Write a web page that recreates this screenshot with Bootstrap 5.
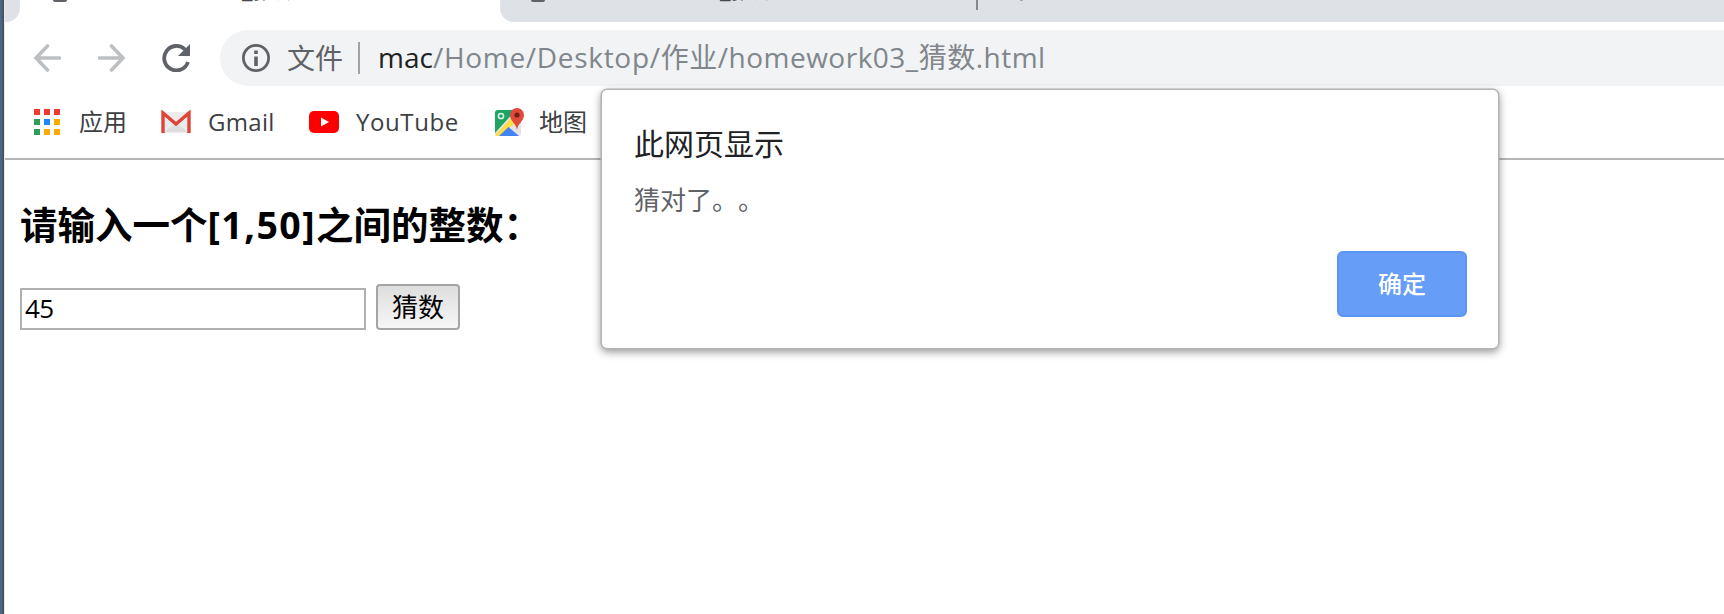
<!DOCTYPE html>
<html lang="zh-CN">
<head>
<meta charset="utf-8">
<meta name="viewport" content="width=device-width, initial-scale=1">
<title>homework03_猜数</title>
<link href="https://cdn.jsdelivr.net/npm/bootstrap@5.3.0/dist/css/bootstrap.min.css" rel="stylesheet">
<style>
html,body{height:100%;overflow:hidden}
body{font-family:"Open Sans","Noto Sans CJK SC",sans-serif;color:#000;background:#fff}
.window-edge{width:5px;background:linear-gradient(90deg,#4b6583 0,#4b6583 2px,#3f4b5b 3px,#4a4f56 3.500px,#e9eaeb 4.500px)}
.tabstrip{height:22px;background:#fff}
.tab-end{width:15px;background:#dee1e6;border-bottom-right-radius:14px}
.tab-active{width:480px}
.tab-rest{background:#dee1e6;border-bottom-left-radius:14px}
.tab-title{font-size:24px;line-height:30px;margin-top:-26px;color:#45484c;height:30px}
.fav{width:14px;height:2px;background:#5f6368;border-radius:0 0 7px 7px}
.tab-line{width:2px;height:10px;background:#85888d}
.toolbar{height:72px;padding:8px 0 8px 28px}
.omnibox{height:56px;background:#f1f3f4;border-radius:28px 0 0 28px;margin-left:30px;padding-left:22px;color:#5f6368;font-size:28px}
.omni-line{width:2px;height:32px;background:#a0a3a6}
.url{color:#80868b;white-space:pre;letter-spacing:.5px}
.url b{font-weight:400;color:#202124;letter-spacing:0}
.url i{font-style:normal;letter-spacing:.7px}
.bookmarks{height:66px;padding-left:29px;padding-bottom:8px;border-bottom:2px solid #b5b5b5;font-size:24px;color:#3c4043}
.bookmarks span{white-space:nowrap}
.page-title{font-size:37.5px;line-height:50px;font-weight:700;margin:40px 0 0;white-space:nowrap}
.page-title span{letter-spacing:1.450px}
.guess-input{width:346px;height:42px;border:2px solid #b0b0b0;padding:0 3px 2px;font-size:26px;letter-spacing:-.5px;line-height:36px;outline:0;color:#000}
.guess-btn{width:84px;height:46px;border:2px solid #a5a5a5;border-radius:4px;background:linear-gradient(#dedede,#f6f6f6);font-size:26px;line-height:38px;padding:0;color:#000}
.dialog-box{left:602px;top:90px;width:896px;height:258px;background:#fff;border-radius:5px;box-shadow:0 0 0 1.5px #b4b4b4,0 3px 9px 1px rgba(0,0,0,.42);padding:30px 31px 31px 32px}
.dialog-title{font-size:30px;line-height:48px;color:#202124}
.dialog-text{font-size:26px;line-height:40px;color:#5f6368;margin-top:12px}
.ok-btn{width:130px;height:66px;background:#669df6;border:2px solid #5a94f5;border-radius:6px;color:#fff;font-size:24px;font-weight:500;padding:0}
</style>
</head>
<body class="d-flex">
<div class="window-edge flex-shrink-0"></div>
<div class="flex-grow-1 overflow-hidden">
  <div class="tabstrip d-flex overflow-hidden">
    <div class="tab-end"></div>
    <div class="tab-active d-flex"><div class="fav" style="margin-left:33px"></div><div class="tab-title" style="margin-left:175px">_猜数</div></div>
    <div class="tab-rest d-flex flex-grow-1"><div class="fav" style="margin-left:31px"></div><div class="tab-title" style="margin-left:175px">_猜数</div><div class="tab-line" style="margin-left:197px"></div><div style="margin-left:42px;width:3px;height:1px;background:#a8abb0"></div></div>
  </div>
  <div class="toolbar d-flex align-items-center">
    <svg width="28" height="28" viewBox="0 0 28 28" fill="none" stroke="#bdc0c3" stroke-width="3.6" stroke-linecap="round"><path d="M26.500 14H3M14.500 2L3 14l11.500 12"/></svg>
    <svg style="margin-left:37px" width="28" height="28" viewBox="0 0 28 28" fill="none" stroke="#bdc0c3" stroke-width="3.6" stroke-linecap="round"><path d="M1.500 14H25M13.500 2L25 14 13.500 26"/></svg>
    <svg style="margin-left:36px" width="28" height="28" viewBox="0 0 28 28"><path d="M26 18A12.200 12.200 0 1 1 23 5.500" fill="none" stroke="#5f6368" stroke-width="3.800"/><path d="M28 0v12H16z" fill="#5f6368"/></svg>
    <div class="omnibox d-flex align-items-center flex-grow-1">
      <svg width="28" height="28" viewBox="0 0 28 28"><circle cx="14" cy="14" r="12.600" fill="none" stroke="#5f6368" stroke-width="2.800"/><path d="M12.200 12.500h3.600v9.500h-3.600zM12.200 6.500h3.600v3.600h-3.600z" fill="#5f6368"/></svg>
      <span style="margin-left:17px">文件</span>
      <div class="omni-line" style="margin-left:15px"></div>
      <span class="url" style="margin-left:18px;margin-top:-2px"><b>mac</b><i>/Home/Desktop/</i>作业/homework03_猜数.html</span>
    </div>
  </div>
  <div class="bookmarks d-flex align-items-center">
    <svg width="26" height="26" viewBox="0 0 26 26"><path d="M0 0h6v6H0zM10 0h6v6h-6zM20 0h6v6h-6z" fill="#f3392f"/><path d="M0 10h6v6H0zM0 20h6v6H0z" fill="#2d9d58"/><path d="M10 10h6v6h-6z" fill="#2086fb"/><path d="M20 10h6v6h-6zM10 20h6v6h-6zM20 20h6v6h-6z" fill="#fbaa08"/></svg>
    <span style="margin-left:19px;width:82px">应用</span>
    <svg width="30" height="24" viewBox="0 0 30 24"><path d="M2 2h26v21H2z" fill="#ececec"/><path d="M3 22l12-9 12 9z" fill="#dedede"/><path d="M2 23V3l13 11L28 3v20" fill="none" stroke="#dc4538" stroke-width="3.400"/></svg>
    <span style="margin-left:17px;width:101px;letter-spacing:.3px">Gmail</span>
    <svg width="30" height="22" viewBox="0 0 30 22"><rect width="30" height="22" rx="5" fill="#f00"/><path d="M12 6.500v9l8-4.500z" fill="#fff"/></svg>
    <span style="margin-left:17px;width:138px;letter-spacing:.6px">YouTube</span>
    <svg width="30" height="30" viewBox="0 0 30 30"><rect x="1" y="3" width="26" height="26" rx="3" fill="#e4e4e4"/><path d="M4 3h18L1 26V6q0-3 3-3z" fill="#1fa463"/><path d="M1 28L18 10l4 5L7 29H2z" fill="#ffdc48"/><path d="M5 29l9.500-9L25 29z" fill="#4283f4"/><circle cx="7" cy="9" r="2.600" fill="none" stroke="#e6f5ed" stroke-width="1.500"/><path d="M23 23c-1-7-7-9-7-15a7 7 0 0 1 14 0c0 6-6 8-7 15z" fill="#e04a3b"/><circle cx="23" cy="8" r="2.600" fill="#751e18"/></svg>
    <span style="margin-left:15px">地图</span>
  </div>
  <main style="padding-left:15px">
    <h3 class="page-title">请输入一个<span>[1,50]</span>之间的整数：</h3>
    <div class="d-flex align-items-end" style="margin-top:34px;gap:10px">
      <input class="guess-input" value="45" aria-label="guess"><button class="guess-btn">猜数</button>
    </div>
  </main>
</div>
<div class="dialog-box position-absolute d-flex flex-column" role="dialog">
  <div class="dialog-title">此网页显示</div>
  <div class="dialog-text">猜对了<span class="d-inline-block">。</span><span class="d-inline-block">。</span></div>
  <button class="ok-btn btn align-self-end mt-auto">确定</button>
</div>
<script src="https://cdn.jsdelivr.net/npm/bootstrap@5.3.0/dist/js/bootstrap.bundle.min.js"></script>
</body>
</html>
